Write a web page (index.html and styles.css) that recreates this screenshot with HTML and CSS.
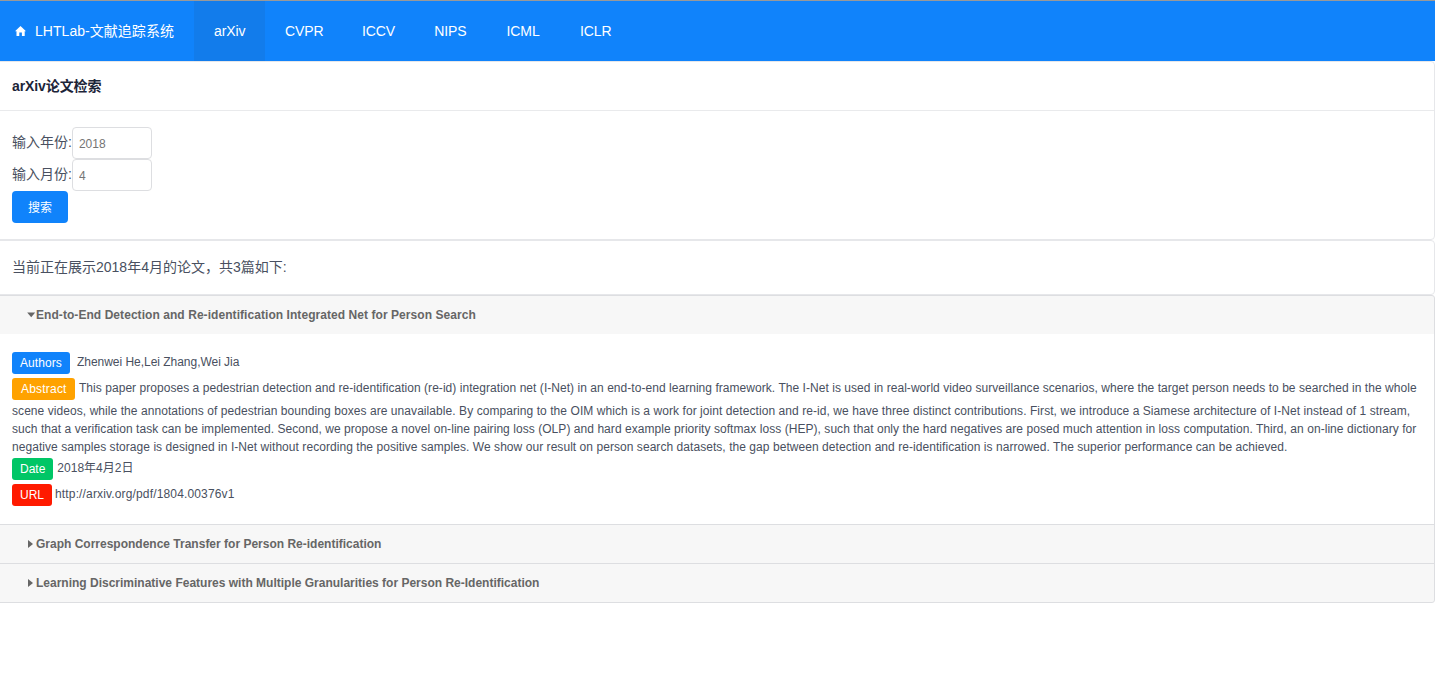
FILE: index.html
```html
<!DOCTYPE html>
<html lang="zh-CN">
<head>
<meta charset="utf-8">
<title>LHTLab-文献追踪系统</title>
<link rel="stylesheet" href="styles.css">
</head>
<body>
<nav class="menu">
  <a class="brand"><svg class="home" viewBox="0 0 11 10"><path d="M5.5 0 11 5.2H9.7V10H6.9V6.4H4.3V10H1.5V5.2H0Z"/></svg><span>LHTLab-文献追踪系统</span></a>
  <a class="item active">arXiv</a>
  <a class="item wide">CVPR</a>
  <a class="item">ICCV</a>
  <a class="item">NIPS</a>
  <a class="item medium">ICML</a>
  <a class="item">ICLR</a>
</nav>
<main class="page">
  <section class="card">
    <h1 class="card-head">arXiv论文检索</h1>
    <form class="search">
      <label class="field">输入年份:<input class="input" placeholder="2018"></label>
      <label class="field">输入月份:<input class="input" placeholder="4"></label>
      <button class="button" type="button">搜索</button>
    </form>
  </section>
  <section class="card summary">当前正在展示2018年4月的论文，共3篇如下:</section>
  <section class="collapse">
    <h2 class="title open"><svg class="arrow" viewBox="0 0 9 8"><path d="M0.2 1.5H8.2L4.2 6.3Z"/></svg><span>End-to-End Detection and Re-identification Integrated Net for Person Search</span></h2>
    <div class="content">
      <div class="row"><span class="tag tag-authors">Authors</span><span class="authors">Zhenwei He,Lei Zhang,Wei Jia</span></div>
      <div class="row"><span class="tag tag-abstract">Abstract</span><span class="lead">This paper proposes a pedestrian detection and re-identification (re-id) integration net (I-Net) in an end-to-end learning framework. The I-Net is used in real-world video surveillance scenarios, where the target person needs to be searched in the whole</span></div>
      <p class="abstract">
        <span class="line loose">scene videos, while the annotations of pedestrian bounding boxes are unavailable. By comparing to the OIM which is a work for joint detection and re-id, we have three distinct contributions. First, we introduce a Siamese architecture of I-Net instead of 1 stream,</span>
        <span class="line">such that a verification task can be implemented. Second, we propose a novel on-line pairing loss (OLP) and hard example priority softmax loss (HEP), such that only the hard negatives are posed much attention in loss computation. Third, an on-line dictionary for</span>
        <span class="line">negative samples storage is designed in I-Net without recording the positive samples. We show our result on person search datasets, the gap between detection and re-identification is narrowed. The superior performance can be achieved.</span>
      </p>
      <div class="row"><span class="tag tag-date">Date</span><span>2018年4月2日</span></div>
      <div class="row"><span class="tag tag-url">URL</span><span class="url">http://arxiv.org/pdf/1804.00376v1</span></div>
    </div>
    <h2 class="title"><svg class="arrow" viewBox="0 0 9 8"><path d="M1 0V8L6 4Z"/></svg><span>Graph Correspondence Transfer for Person Re-identification</span></h2>
    <h2 class="title"><svg class="arrow" viewBox="0 0 9 8"><path d="M1 0V8L6 4Z"/></svg><span>Learning Discriminative Features with Multiple Granularities for Person Re-Identification</span></h2>
  </section>
</main>
</body>
</html>
```

FILE: styles.css
```css
* { box-sizing: border-box; }
body { margin: 0; background: #fff; color: #495060; font-family: "Liberation Sans", "Noto Sans CJK SC", sans-serif; font-size: 12px; line-height: 18px; overflow: hidden; }
.menu { display: flex; height: 61px; border-top: 1px solid #999; background: #1083fb; color: #fff; font-size: 14px; line-height: 60px; }
.brand { display: flex; align-items: center; width: 194px; padding-left: 15px; gap: 9px; letter-spacing: 0.04px; }
.home { width: 11px; height: 10px; fill: #fff; }
.item { width: 72.3px; padding-left: 20px; letter-spacing: -0.12px; }
.item.active { width: 71px; background: #127ceb; }
.item.wide { width: 77px; }
.item.medium { width: 73.5px; }
.page { margin-left: -6px; }
.card { border: 1px solid #e6e7ea; border-radius: 4px; }
.card-head { margin: 0; height: 49px; padding: 0 17px; border-bottom: 1px solid #e9eaec; color: #1c2438; font-size: 14px; line-height: 49px; letter-spacing: -0.1px; }
.search { display: flex; flex-direction: column; align-items: flex-start; height: 128px; margin: 0; padding: 16px 17px; }
.field { display: flex; height: 32px; font-size: 14px; line-height: 30px; }
.input { width: 80px; height: 32px; padding: 1px 6px 0; border: 1px solid #dddee1; border-radius: 4px; font: 12px "Liberation Sans", sans-serif; }
.button { width: 56px; height: 32px; padding: 0 0 2px; border: 0; border-radius: 4px; background: #1083fb; color: #fff; font: 12px "Noto Sans CJK SC", sans-serif; }
.summary { height: 55px; padding: 0 17px; font-size: 14px; line-height: 53px; }
.collapse { border: 1px solid #dddee1; border-radius: 3px; background: #f7f7f7; }
.title { display: flex; align-items: center; height: 38px; margin: 0; padding-left: 32px; color: #666; font-size: 12px; }
.title.open { letter-spacing: 0.06px; }
.arrow { width: 9px; height: 8px; fill: #666; }
.content + .title, .title + .title { height: 39px; border-top: 1px solid #dddee1; }
.content { height: 190px; padding: 16px 17px; background: #fff; }
.row { display: flex; height: 26px; line-height: 24px; white-space: nowrap; gap: 4px; }
.tag { flex: none; height: 22px; margin-top: 2px; padding: 0 8px; border-radius: 3px; color: #fff; line-height: 22px; }
.tag-authors { width: 58px; background: #1083fb; letter-spacing: 0.08px; }
.tag-abstract { width: 63px; padding-left: 9px; background: #ffa200; letter-spacing: 0.2px; }
.tag-date { background: #00c666; }
.tag-url { background: #ff1a00; }
.authors { margin-left: 3px; letter-spacing: -0.03px; }
.lead { letter-spacing: 0.044px; }
.url { margin-left: -1px; letter-spacing: 0.15px; }
.abstract { margin: 0; height: 54px; }
.line { display: block; white-space: nowrap; letter-spacing: 0.053px; }
.line.loose { letter-spacing: 0.0665px; }
```
